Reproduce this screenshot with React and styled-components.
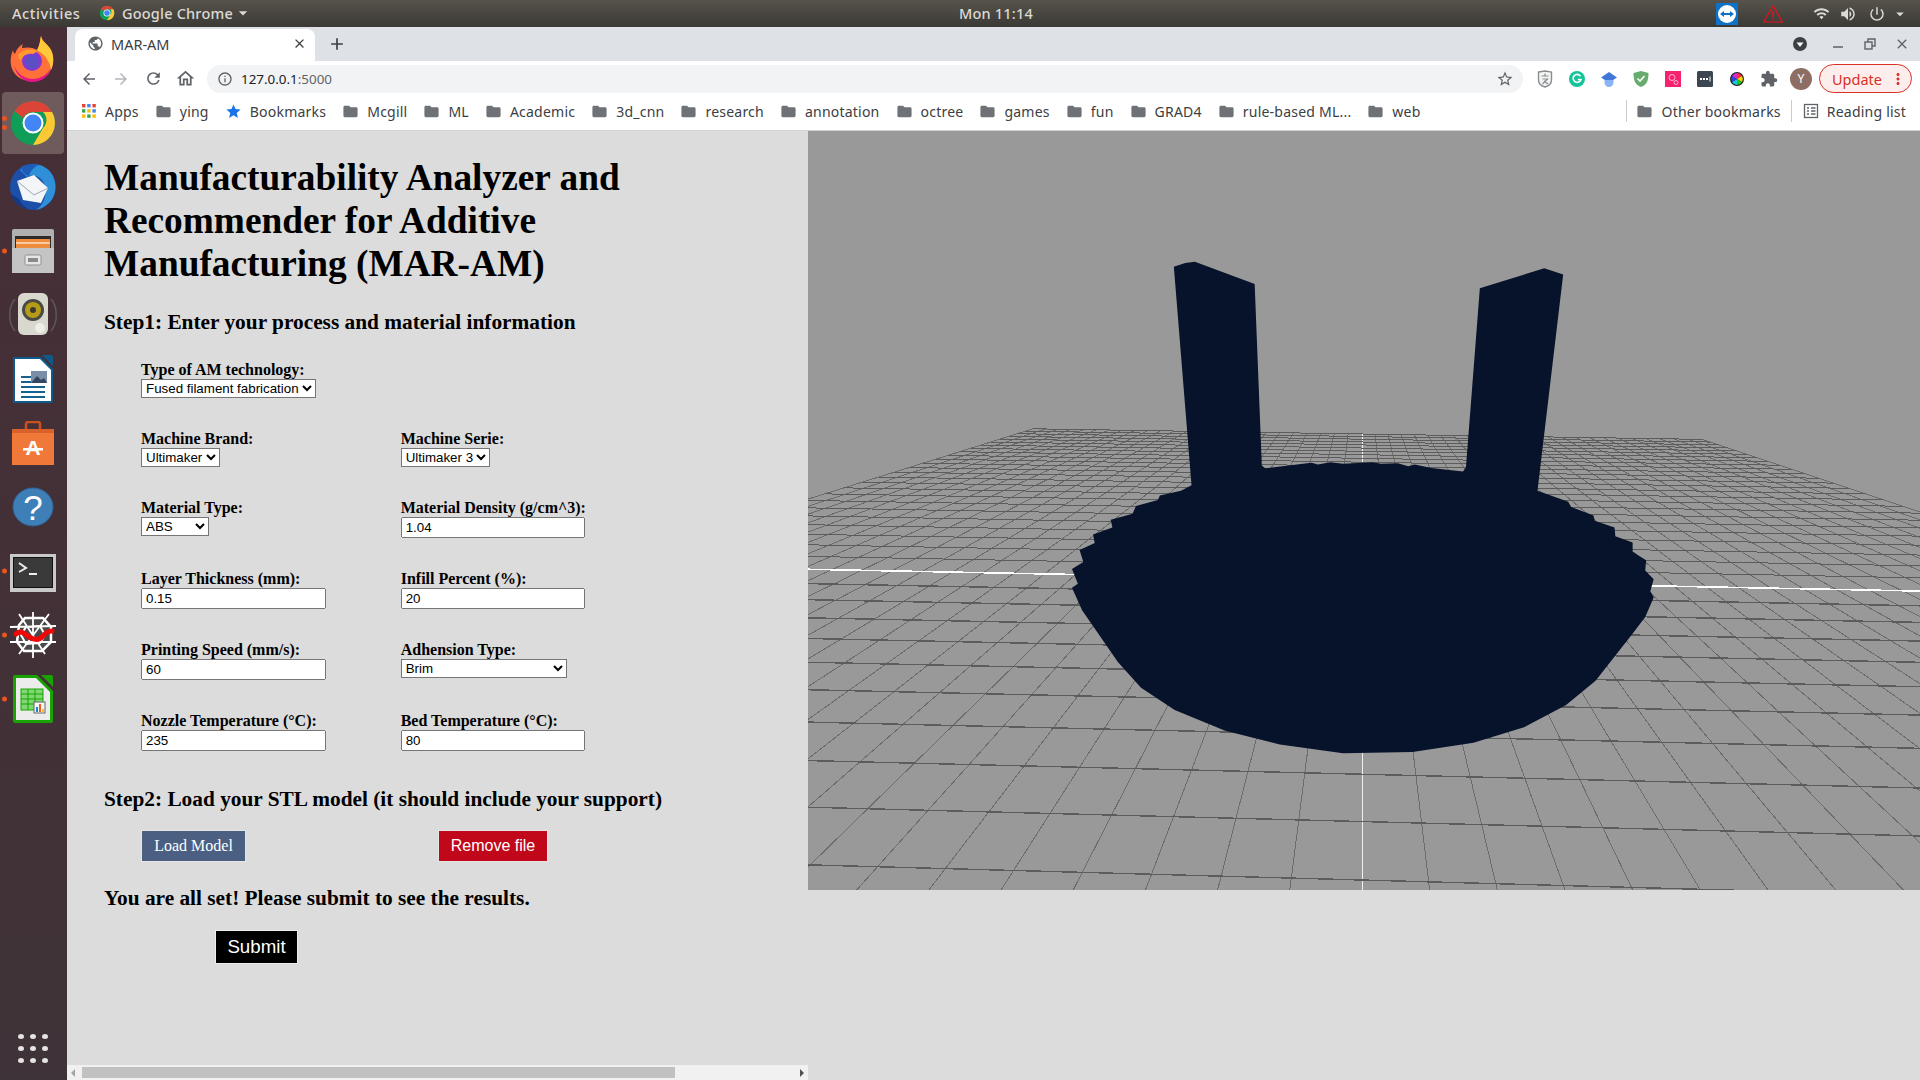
import React from "react";
import styled, { createGlobalStyle } from "styled-components";
import {
  MdAdd,
  MdArrowBack,
  MdArrowDropDown,
  MdArrowForward,
  MdClose,
  MdExtension,
  MdFolder,
  MdInfoOutline,
  MdMoreVert,
  MdOutlineHome,
  MdPowerSettingsNew,
  MdPublic,
  MdRefresh,
  MdStar,
  MdStarBorder,
  MdVolumeUp,
  MdWifi,
} from "react-icons/md";

const UI_FONT = `"Noto Sans", "Open Sans", sans-serif`;

const GlobalStyle = createGlobalStyle`
  html, body {
    margin: 0;
    padding: 0;
    overflow: hidden;
    background: #dcdcdc;
  }
  * { box-sizing: border-box; }
`;

const Screen = styled.div`
  width: 1920px;
  height: 1080px;
  display: flex;
  flex-direction: column;
  overflow: hidden;
`;

/* gnome top bar */
const TopBar = styled.div`
  height: 27px;
  flex: none;
  display: grid;
  grid-template-columns: 959px 71px 1fr;
  align-items: center;
  background: linear-gradient(#57534b, #3a3935);
  color: #dcdad5;
  font: 500 14.5px ${UI_FONT};
  letter-spacing: 0.2px;
`;

const TopLeft = styled.div`
  display: flex;
  align-items: center;
  padding: 0 0 2px 12px;
`;

const ActivitiesLabel = styled.span`
  width: 68px;
  letter-spacing: 0.6px;
`;

const AppMenu = styled.div`
  display: flex;
  align-items: center;
  margin-left: 19px;
  gap: 7px;
`;

const Clock = styled.div`
  text-align: center;
  white-space: nowrap;
  padding-bottom: 2px;
`;

const TopRight = styled.div`
  display: flex;
  align-items: center;
  padding-left: 686px;
  color: #dcdad5;
`;

const TrayIcon = styled.span`
  display: flex;
  align-items: center;
  justify-content: center;
  width: ${(p) => p.$w}px;
  margin-left: ${(p) => p.$ml || 0}px;
`;

const Desktop = styled.div`
  flex: 1;
  display: flex;
  min-height: 0;
`;

/* launcher */
const Dock = styled.div`
  width: 67px;
  flex: none;
  display: flex;
  flex-direction: column;
  gap: 2px;
  padding: 1px 0 16px;
  background: linear-gradient(#482e36, #3e3338);
`;

const DockItem = styled.div`
  position: relative;
  width: 62px;
  height: 62px;
  margin-left: 2px;
  display: flex;
  align-items: center;
  justify-content: center;
  border-radius: 4px;
  background: ${(p) => (p.$active ? "#6f5a5c" : "transparent")};
`;

const DockDots = styled.div`
  position: absolute;
  left: 0;
  top: 50%;
  transform: translateY(-50%);
  display: flex;
  flex-direction: column;
  gap: 4px;
`;

const DockDot = styled.i`
  display: block;
  width: 5px;
  height: 5px;
  border-radius: 50%;
  background: #e95420;
`;

const ShowApps = styled.div`
  margin: auto 0 0 2px;
  width: 62px;
  height: 32px;
  display: grid;
  grid-template-columns: repeat(3, 6px);
  gap: 7px 6px;
  justify-content: center;
  align-content: center;
  i {
    width: 6px;
    height: 5px;
    border-radius: 50%;
    background: #e6e4e2;
  }
`;

const Browser = styled.div`
  flex: 1;
  min-width: 0;
  display: flex;
  flex-direction: column;
`;

const TabStrip = styled.div`
  height: 34px;
  flex: none;
  display: flex;
  align-items: flex-end;
  padding: 0 2px 0 8px;
  background: #dee1e6;
`;

const Tab = styled.div`
  width: 240px;
  height: 32px;
  display: flex;
  align-items: center;
  padding: 0 8px 3px 12px;
  background: #fff;
  border-radius: 8px 8px 0 0;
  color: #3c4043;
  font: 14.5px ${UI_FONT};
  span { margin-left: 7px; flex: 1; }
`;

const NewTab = styled.div`
  width: 28px;
  height: 34px;
  margin-left: 8px;
  display: flex;
  align-items: center;
  justify-content: center;
  color: #3c4043;
`;

const WindowButtons = styled.div`
  margin-left: auto;
  height: 34px;
  display: flex;
  align-items: center;
  color: #3c4043;
`;

const WindowButton = styled.div`
  width: 32px;
  display: flex;
  justify-content: center;
  margin-right: ${(p) => p.$mr || 0}px;
`;

const Toolbar = styled.div`
  height: 35px;
  flex: none;
  display: flex;
  align-items: center;
  padding: 0 8px 0 6px;
  background: #fff;
`;

const NavButton = styled.div`
  width: 32px;
  display: flex;
  justify-content: center;
  color: ${(p) => (p.$off ? "#b4b7bb" : "#5f6368")};
`;

const AddressBar = styled.div`
  flex: 1;
  height: 28px;
  margin: 0 6px;
  display: flex;
  align-items: center;
  padding: 0 9px 0 10px;
  border-radius: 14px;
  background: #f1f3f4;
  color: #202124;
  font: 13.4px ${UI_FONT};
  em {
    font-style: normal;
    color: #5f6368;
  }
`;

const Url = styled.div`
  margin-left: 8px;
  flex: 1;
`;

const ExtButton = styled.div`
  width: 32px;
  display: flex;
  justify-content: center;
  align-items: center;
  color: #5f6368;
`;

const Avatar = styled.div`
  width: 22px;
  height: 22px;
  border-radius: 50%;
  display: flex;
  align-items: center;
  justify-content: center;
  background: #8d6e63;
  color: #fff;
  font: 12px ${UI_FONT};
`;

const UpdatePill = styled.div`
  width: 93px;
  height: 29px;
  margin-left: 2px;
  display: flex;
  align-items: center;
  justify-content: space-between;
  padding: 0 4px 0 12px;
  border: 1px solid #d93025;
  border-radius: 15px;
  background: #fdeeed;
  color: #d93025;
  font: 14.5px ${UI_FONT};
`;

const BookmarkBar = styled.div`
  height: 35px;
  flex: none;
  display: flex;
  align-items: center;
  padding: 0 14px 4px 14px;
  gap: 16px;
  background: #fff;
  border-bottom: 1px solid #d0d2d5;
  color: #3c4043;
  font: 14.05px ${UI_FONT};
  letter-spacing: 0.2px;
`;

const Bookmark = styled.div`
  display: flex;
  align-items: center;
  gap: 8px;
  white-space: nowrap;
  color: #3c4043;
  svg { flex: none; }
`;

const BarSeparator = styled.div`
  width: 1px;
  height: 22px;
  background: #c9cbce;
  margin: ${(p) => (p.$push ? "0 -7px 0 auto" : "0 -5.5px")};
`;

const Content = styled.div`
  flex: 1;
  min-height: 0;
  display: grid;
  grid-template-columns: 741px 1fr;
  background: #dcdcdc;
`;

const FormColumn = styled.div`
  display: flex;
  flex-direction: column;
  min-height: 0;
`;

const FormBody = styled.div`
  flex: 1;
  padding: 25px 0 0 37px;
  color: #000;
  font-family: "Liberation Serif", "Times New Roman", serif;
`;

const Title = styled.h1`
  margin: 0;
  width: 560px;
  font-size: 37.33px;
  line-height: 43px;
  font-weight: 700;
`;

const Step = styled.h3`
  margin: ${(p) => p.$mt}px 0 0;
  font-size: 21.33px;
  line-height: 24px;
  font-weight: 700;
`;

const FieldGrid = styled.div`
  margin: 26px 0 0 37px;
  display: grid;
  grid-template-columns: 259.7px 1fr;
  row-gap: 31px;
  align-items: start;
`;

const Field = styled.div`
  display: flex;
  flex-direction: column;
  align-items: flex-start;
`;

const FieldLabel = styled.label`
  font-size: 16px;
  line-height: 19px;
  font-weight: 700;
`;

const SelectBox = styled.select`
  width: ${(p) => p.$w}px;
  height: 19px;
  font: 13.33px "Liberation Sans", Arial, sans-serif;
  background: #fff;
`;

const TextBox = styled.input`
  width: ${(p) => p.$w || 184}px;
  height: 21px;
  font: 13.33px "Liberation Sans", Arial, sans-serif;
  padding: 1px 3px;
`;

const LoadRow = styled.div`
  margin: 19px 0 0 37px;
  display: flex;
`;

const ActionButton = styled.button`
  width: ${(p) => p.$w}px;
  height: 32px;
  margin-right: ${(p) => p.$mr || 0}px;
  padding: 0;
  border: 1px solid #e6e6e6;
  background: ${(p) => p.$bg};
  color: #fff;
  font-size: 16px;
  font-family: ${(p) =>
    p.$serif
      ? `"Liberation Serif", serif`
      : `"Liberation Sans", Arial, sans-serif`};
`;

const SubmitButton = styled.button`
  display: block;
  width: 83px;
  height: 34px;
  margin: 20px 0 0 111px;
  padding: 0;
  border: 1px solid #eee;
  background: #000;
  color: #fff;
  font: 18.7px "Liberation Sans", Arial, sans-serif;
`;

const ScrollTrack = styled.div`
  height: 15px;
  flex: none;
  display: flex;
  align-items: center;
  background: #f1f1f1;
  position: relative;
`;

const ScrollThumb = styled.div`
  width: 593px;
  height: 11px;
  margin-left: 15px;
  background: #c1c1c1;
`;

const ScrollArrow = styled.i`
  position: absolute;
  top: 4px;
  ${(p) => (p.$right ? "right: 4px;" : "left: 4px;")}
  border-top: 4px solid transparent;
  border-bottom: 4px solid transparent;
  ${(p) =>
    p.$right
      ? "border-left: 4px solid #505050;"
      : "border-right: 4px solid #a3a3a3;"}
`;

const Viewer = styled.svg`
  display: block;
  width: 1112px;
  height: 759px;
  background: #999;
`;

/* ---- grid floor of the stl viewer, worked out from a vanishing point ---- */
const VP_X = 1362;
const VP_Y = 326;
const FAR_Y = 434;

const rowSlope = (y0) => 0.013 + 0.000026 * (y0 - VP_Y);
const rowY = (k) => VP_Y + 1 / (0.001805 + 0.000213 * k);
const spread = (u) => (u < 0 ? (u * 3.2) / 25 : (u * 3.0) / 25);

// where a depth line with spread a meets the row through (VP_X, y0)
const meet = (a, y0) => {
  const s = rowSlope(y0);
  const y = (y0 - a * s * VP_Y) / (1 - a * s);
  return [VP_X + a * (y - VP_Y), y];
};

const FloorGrid = () => {
  const rows = [];
  for (let k = 0; k <= 35; k++) {
    const y0 = rowY(k);
    const [x1, y1] = meet(spread(-25), y0);
    const [x2, y2] = meet(spread(25), y0);
    rows.push(
      <line
        key={"r" + k}
        x1={x1}
        y1={y1}
        x2={x2}
        y2={y2}
        stroke={k === 10 ? "#fff" : "#5c5c5c"}
        strokeWidth={k === 10 ? 1.6 : k < 10 ? 1.4 : 1}
      />
    );
  }
  const cols = [];
  for (let u = -25; u <= 25; u++) {
    const a = spread(u);
    const [x1, y1] = meet(a, FAR_Y);
    cols.push(
      <line
        key={"c" + u}
        x1={x1}
        y1={y1}
        x2={VP_X + a * (900 - VP_Y)}
        y2={900}
        stroke={u === 0 ? "#f0f0f0" : "#6c6c6c"}
        strokeWidth={1}
      />
    );
  }
  return (
    <g shapeRendering="crispEdges">
      {cols}
      {rows}
    </g>
  );
};

const MODEL_POINTS =
  "318,78 345,67 368,63 510,128 527,655 535,663 610,652 645,647 660,652 690,645 720,650 790,645 810,650 850,648 875,657 890,652 930,662 1005,672 1012,660 1045,140 1198,82 1243,100 1182,728 1255,760 1262,775 1315,800 1318,815 1365,835 1367,860 1408,878 1408,905 1440,930 1438,960 1458,985 1450,1020 1458,1038 1438,1095 1410,1140 1320,1280 1250,1350 1150,1415 1030,1460 885,1487 720,1490 570,1465 440,1425 320,1365 240,1300 185,1225 100,1075 76,1010 90,998 76,955 103,935 94,900 130,880 126,855 172,835 168,812 220,795 228,772 280,755 285,742 335,728 360,712";

/* ---- logos ---- */
const ChromeLogo = ({ size }) => (
  <svg width={size} height={size} viewBox="0 0 48 48">
    <circle cx="24" cy="24" r="22" fill="#0f9d58" />
    <path d="M24 2a22 22 0 0 1 19 11H24a11 11 0 0 0-10 6L5.500 12A22 22 0 0 1 24 2z" fill="#db4437" />
    <path d="M43 13a22 22 0 0 1-19 33l10-17a11 11 0 0 0 0-16z" fill="#fcc934" />
    <circle cx="24" cy="24" r="10.500" fill="#fff" />
    <circle cx="24" cy="24" r="8.500" fill="#4285f4" />
  </svg>
);

const FirefoxLogo = () => (
  <svg width="48" height="48" viewBox="0 0 48 48">
    <path d="M32 1c1 6 7 8 10 14 5 10 1 23-7 28-9 5-21 4-28-3C1 34 0 24 4 15c0 2 1 3 2 4 1-4 4-8 8-10-1 2-1 3-1 4 5-1 11-1 15 2 3-5 3-10 4-14z" fill="#ff7139" />
    <path d="M32 1c1 6 7 8 10 14 3 6 3 14 0 20-1-7-4-14-14-20 3-5 3-10 4-14z" fill="#ffc93a" />
    <path d="M5 30c3 9 11 14 19 14 7 0 14-4 18-11-3 9-10 14-18 14C14 47 7 40 5 30z" fill="#e31587" />
    <circle cx="23" cy="26" r="10" fill="#7d3bd1" />
    <circle cx="23" cy="27" r="6.500" fill="#5b4fc4" />
    <path d="M9 20c4-5 12-7 20-4l-5 3c-5-1-10 1-12 6-2 0-3-3-3-5z" fill="#ff9a2e" />
  </svg>
);

const ThunderbirdLogo = () => (
  <svg width="50" height="50" viewBox="0 0 50 50">
    <circle cx="25" cy="25" r="23" fill="#1c4fa8" />
    <path d="M12 8C20-1 38 0 45 14c4 9 3 19-3 26-4 4-9 7-14 8 8-6 11-15 9-24-2-8-10-13-18-9z" fill="#2f8fd8" />
    <path d="M9 19 26 13l14 13-7 15-18-3z" fill="#f4f5f7" />
    <path d="M9 19l17 14 14-7" fill="none" stroke="#9aa7bb" strokeWidth="1" />
    <path d="M13 5c5-3 12-4 18-2-5 2-9 6-10 11-4-1-7-4-8-9z" fill="#1c5cb8" />
    <path d="M3 32c2 8 9 14 18 15-5-3-8-5-10-10z" fill="#123a86" />
  </svg>
);

const FilesLogo = () => (
  <svg width="42" height="44" viewBox="0 0 42 44">
    <rect x="0" y="0" width="42" height="44" rx="2" fill="#b0b0b0" />
    <rect x="3" y="7" width="36" height="12" fill="#2d2a28" />
    <rect x="4" y="10" width="34" height="9" fill="#ef8b3c" />
    <rect x="4" y="13" width="34" height="2" fill="#f8c9a0" />
    <rect x="0" y="19" width="42" height="25" fill="#c4c4c4" />
    <rect x="13" y="26" width="16" height="10" rx="1.500" fill="#e6e6e6" stroke="#8f8f8f" />
    <rect x="16" y="29" width="10" height="4" fill="#8a8a8a" />
  </svg>
);

const SpeakerLogo = () => (
  <svg width="48" height="44" viewBox="0 0 48 44">
    <path d="M6 6C-1 14-1 30 6 38M42 6c7 8 7 24 0 32" fill="none" stroke="#5d5663" strokeWidth="1.500" />
    <rect x="9" y="0" width="30" height="42" rx="6" fill="#d8d8cf" />
    <circle cx="24" cy="17" r="11" fill="#4a4a44" />
    <circle cx="24" cy="17" r="8" fill="#b59b16" />
    <circle cx="24" cy="17" r="3" fill="#3b3a30" />
    <circle cx="31" cy="35" r="5" fill="#eeeee6" />
  </svg>
);

const WriterLogo = () => (
  <svg width="40" height="48" viewBox="0 0 40 48">
    <path d="M0 2h28l12 12v32a2 2 0 0 1-2 2H0z" fill="#0f5a8a" />
    <path d="M2 4h25l11 11v31H2z" fill="#fff" />
    <path d="M29 0h9a2 2 0 0 1 2 2v9z" fill="#0f5a8a" />
    <path d="M8 21h11v2H8zM8 26h11v2H8zM8 31h24v2H8zM8 36h24v2H8zM8 41h24v2H8z" fill="#15608f" />
    <rect x="18" y="16" width="16" height="12" fill="#7b8ea8" />
    <path d="M18 28l6-7 4 4 3-2 3 5z" fill="#33465f" />
  </svg>
);

const StoreLogo = () => (
  <svg width="42" height="44" viewBox="0 0 42 44">
    <path d="M14 8V3a2 2 0 0 1 2-2h10a2 2 0 0 1 2 2v5" fill="none" stroke="#c9501f" strokeWidth="2.500" />
    <path d="M0 8h42v36H0z" fill="#f0793a" />
    <path d="M0 8h42v4H0z" fill="#d9602a" />
    <text x="21" y="34" textAnchor="middle" fill="#fff" fontFamily="Liberation Sans" fontWeight="700" fontSize="21">A</text>
    <rect x="11" y="27" width="20" height="2.500" fill="#fff" />
  </svg>
);

const HelpLogo = () => (
  <svg width="42" height="40" viewBox="0 0 42 40">
    <ellipse cx="21" cy="20" rx="20" ry="19" fill="#3f7fb8" stroke="#2f6499" />
    <text x="21" y="33" textAnchor="middle" fill="#fff" fontFamily="Liberation Sans" fontWeight="400" fontSize="35">?</text>
  </svg>
);

const TerminalLogo = () => (
  <svg width="46" height="42" viewBox="0 0 46 42">
    <rect y="4" width="46" height="38" fill="#c9c9c9" />
    <rect x="3" y="7" width="40" height="31" fill="#111" />
    <rect x="4" y="8" width="38" height="29" fill="#3a3a3a" />
    <path d="M9 13l7 5-7 4" fill="none" stroke="#eee" strokeWidth="2" />
    <path d="M19 24h8" stroke="#eee" strokeWidth="2" />
  </svg>
);

const WebLogo = () => (
  <svg width="48" height="48" viewBox="0 0 48 48">
    <path d="M10 14 16 7l18 0 8 9 0 15-9 9-18 0-7-9z" fill="#4a4a4a" stroke="#fff" strokeWidth="2.500" />
    <path d="M17 16l14-1 5 9-5 8-14 1-5-9z" fill="none" stroke="#fff" strokeWidth="2" />
    <path d="M24 1v46M1 16l46-1M47 31 1 31M10 3l26 40M40 3 10 43" stroke="#fff" strokeWidth="1.800" fill="none" />
    <path d="M7 23c5-4 8-1 13 3 5 3 10 4 14-1 3-4 6-5 9-5" fill="none" stroke="#f00808" strokeWidth="5" strokeLinecap="round" />
  </svg>
);

const CalcLogo = () => (
  <svg width="40" height="48" viewBox="0 0 40 48">
    <path d="M0 2a2 2 0 0 1 2-2h22l16 16v30a2 2 0 0 1-2 2H2a2 2 0 0 1-2-2z" fill="#18a303" />
    <path d="M3 3h20l14 14v28H3z" fill="#ececec" />
    <path d="M28 0h10a2 2 0 0 1 2 2v10z" fill="#18a303" />
    <rect x="8" y="14" width="22" height="21" fill="#7fd874" stroke="#18a303" />
    <path d="M8 19h22M8 24h22M8 29h22M15 14v21M22 14v21" stroke="#18a303" fill="none" />
    <rect x="21" y="27" width="11" height="11" fill="#f5f5f5" stroke="#666" />
    <path d="M23 32h2v5h-2z" fill="#1f7fd0" />
    <path d="M26 29h2v8h-2z" fill="#e8601c" />
    <path d="M29 34h2v3h-2z" fill="#f2c230" />
  </svg>
);

const TeamViewerLogo = () => (
  <svg width="22" height="22" viewBox="0 0 22 22">
    <rect width="22" height="22" fill="#0e72c9" />
    <circle cx="11" cy="11" r="9" fill="#fff" />
    <path d="M4 11l4-3v2h6V8l4 3-4 3v-2H8v2z" fill="#0e72c9" />
  </svg>
);

const WarningLogo = () => (
  <svg width="20" height="18" viewBox="0 0 20 18">
    <path d="M10 1 19.500 17H.500z" fill="none" stroke="#e8101a" strokeWidth="1.200" />
    <path d="M9.300 6h1.400v6H9.300zM9.300 13.500h1.400V15H9.300z" fill="#e8101a" />
  </svg>
);

const AppsGrid = () => (
  <svg width="16" height="16" viewBox="0 0 16 16">
    {["#ea4335", "#4285f4", "#ea4335", "#34a853", "#fbbc05", "#4285f4", "#fbbc05", "#34a853", "#fbbc05"].map((c, i) => (
      <rect key={i} x={1 + (i % 3) * 5.2} y={1 + Math.floor(i / 3) * 5.2} width="3.400" height="3.400" fill={c} />
    ))}
  </svg>
);

const ReadingIcon = () => (
  <svg width="16" height="16" viewBox="0 0 16 16" fill="none" stroke="#5f6368" strokeWidth="1.300">
    <rect x="1.500" y="1.500" width="13" height="13" />
    <path d="M4 5h2M8 5h4.500M4 8h2M8 8h4.500M4 11h2M8 11h4.500" />
  </svg>
);

const Extensions = () => (
  <>
    <ExtButton>
      <svg width="16" height="18" viewBox="0 0 16 18">
        <path d="M1.500 2 8 1l6.500 1v8c0 4-3 6-6.500 7-3.500-1-6.500-3-6.500-7z" fill="#f4f4f4" stroke="#8a8d90" strokeWidth="1.400" />
        <path d="M4.500 6h7M8 3.500V6M5.500 9h5L5.500 14M7 11l4 3" fill="none" stroke="#8a8d90" strokeWidth="1.200" />
      </svg>
    </ExtButton>
    <ExtButton>
      <svg width="16" height="16" viewBox="0 0 16 16">
        <circle cx="8" cy="8" r="8" fill="#15c39a" />
        <path d="M11.500 5.200A4 4 0 1 0 12 8.500H8.800" fill="none" stroke="#fff" strokeWidth="1.600" />
      </svg>
    </ExtButton>
    <ExtButton>
      <svg width="16" height="16" viewBox="0 0 16 16">
        <path d="M3.500 8h9v3.500a4.500 4.500 0 0 1-9 0z" fill="#8ab4f8" />
        <path d="M8 1l8 5.500-4 2.500H4L0 6.500z" fill="#3f78d8" />
      </svg>
    </ExtButton>
    <ExtButton>
      <svg width="16" height="18" viewBox="0 0 16 18">
        <path d="M8 1l7.500 2c0 7-1.500 12-7.500 14C2 15 .500 10 .500 3z" fill="#68ab6e" />
        <path d="M4.500 8.500l2.500 2.500 4.500-5" fill="none" stroke="#fff" strokeWidth="1.600" />
      </svg>
    </ExtButton>
    <ExtButton>
      <svg width="16" height="16" viewBox="0 0 16 16">
        <rect width="16" height="16" fill="#f7226f" />
        <circle cx="7" cy="6.500" r="3" fill="none" stroke="#ffc2d8" strokeWidth="0.900" />
        <circle cx="11" cy="11.500" r="2" fill="none" stroke="#ffc2d8" strokeWidth="0.900" />
      </svg>
    </ExtButton>
    <ExtButton>
      <svg width="16" height="16" viewBox="0 0 16 16">
        <rect width="16" height="16" rx="1.500" fill="#3b4652" />
        <path d="M3 7h2v2H3zM6 7h2v2H6zM9 7h2v2H9zM12.500 5.500h1v5h-1z" fill="#fff" />
      </svg>
    </ExtButton>
    <ExtButton>
      <svg width="14" height="14" viewBox="0 0 14 14">
        <circle cx="7" cy="7" r="7" fill="#222" />
        <path d="M7 7 7 1a6 6 0 0 1 5 3z" fill="#ff2d2d" />
        <path d="M7 7 12 4a6 6 0 0 1 0 6z" fill="#ffd400" />
        <path d="M7 7l5 3a6 6 0 0 1-5 3z" fill="#21c521" />
        <path d="M7 7v6a6 6 0 0 1-5-3z" fill="#16c7d6" />
        <path d="M7 7 2 10a6 6 0 0 1 0-6z" fill="#2a48e0" />
        <path d="M7 7 2 4a6 6 0 0 1 5-3z" fill="#d42bd4" />
      </svg>
    </ExtButton>
    <ExtButton>
      <MdExtension size={18} />
    </ExtButton>
    <ExtButton>
      <Avatar>Y</Avatar>
    </ExtButton>
  </>
);

const BOOKMARKS = [
  "ying",
  "Bookmarks",
  "Mcgill",
  "ML",
  "Academic",
  "3d_cnn",
  "research",
  "annotation",
  "octree",
  "games",
  "fun",
  "GRAD4",
  "rule-based ML...",
  "web",
];

const DOCK = [
  { logo: <FirefoxLogo /> },
  { logo: <ChromeLogo size={48} />, dots: 2, active: true },
  { logo: <ThunderbirdLogo /> },
  { logo: <FilesLogo />, dots: 1 },
  { logo: <SpeakerLogo /> },
  { logo: <WriterLogo /> },
  { logo: <StoreLogo /> },
  { logo: <HelpLogo /> },
  { logo: <TerminalLogo />, dots: 1 },
  { logo: <WebLogo />, dots: 1 },
  { logo: <CalcLogo />, dots: 1 },
];

const Select = ({ w, value }) => (
  <SelectBox $w={w} defaultValue={value}>
    <option>{value}</option>
  </SelectBox>
);

const App = () => {
  return (
    <Screen>
      <GlobalStyle />
      <TopBar>
        <TopLeft>
          <ActivitiesLabel>Activities</ActivitiesLabel>
          <AppMenu>
            <ChromeLogo size={16} />
            Google Chrome
          </AppMenu>
          <MdArrowDropDown size={20} />
        </TopLeft>
        <Clock>Mon 11:14</Clock>
        <TopRight>
          <TrayIcon $w={22}>
            <TeamViewerLogo />
          </TrayIcon>
          <TrayIcon $w={20} $ml={25}>
            <WarningLogo />
          </TrayIcon>
          <TrayIcon $w={18} $ml={29}>
            <MdWifi size={17} />
          </TrayIcon>
          <TrayIcon $w={18} $ml={9}>
            <MdVolumeUp size={18} />
          </TrayIcon>
          <TrayIcon $w={18} $ml={11}>
            <MdPowerSettingsNew size={18} />
          </TrayIcon>
          <TrayIcon $w={18} $ml={5}>
            <MdArrowDropDown size={20} />
          </TrayIcon>
        </TopRight>
      </TopBar>
      <Desktop>
        <Dock>
          {DOCK.map((item, i) => (
            <DockItem key={i} $active={item.active}>
              {item.dots && (
                <DockDots>
                  {Array.from({ length: item.dots }).map((_, d) => (
                    <DockDot key={d} />
                  ))}
                </DockDots>
              )}
              {item.logo}
            </DockItem>
          ))}
          <ShowApps>
            {Array.from({ length: 9 }).map((_, i) => (
              <i key={i} />
            ))}
          </ShowApps>
        </Dock>
        <Browser>
          <TabStrip>
            <Tab>
              <MdPublic size={17} color="#5f6368" />
              <span>MAR-AM</span>
              <MdClose size={15} />
            </Tab>
            <NewTab>
              <MdAdd size={20} />
            </NewTab>
            <WindowButtons>
              <WindowButton $mr={6}>
                <svg width="16" height="16" viewBox="0 0 16 16">
                  <circle cx="8" cy="8" r="7" fill="#3c4043" />
                  <path d="M4.500 6.500h7L8 11z" fill="#fff" />
                </svg>
              </WindowButton>
              <WindowButton>
                <svg width="12" height="12" viewBox="0 0 12 12">
                  <path d="M1 9h10" stroke="#5f6368" strokeWidth="1.500" />
                </svg>
              </WindowButton>
              <WindowButton>
                <svg width="12" height="12" viewBox="0 0 12 12" fill="none" stroke="#5f6368" strokeWidth="1.400">
                  <rect x="1" y="4" width="7" height="7" />
                  <path d="M4 4V1h7v7H8" />
                </svg>
              </WindowButton>
              <WindowButton>
                <MdClose size={16} color="#5f6368" />
              </WindowButton>
            </WindowButtons>
          </TabStrip>
          <Toolbar>
            <NavButton>
              <MdArrowBack size={18} />
            </NavButton>
            <NavButton $off>
              <MdArrowForward size={18} />
            </NavButton>
            <NavButton>
              <MdRefresh size={19} />
            </NavButton>
            <NavButton>
              <MdOutlineHome size={21} />
            </NavButton>
            <AddressBar>
              <MdInfoOutline size={16} color="#5f6368" />
              <Url>
                127.0.0.1<em>:5000</em>
              </Url>
              <MdStarBorder size={18} color="#5f6368" />
            </AddressBar>
            <Extensions />
            <UpdatePill>
              Update
              <MdMoreVert size={18} />
            </UpdatePill>
          </Toolbar>
          <BookmarkBar>
            <Bookmark>
              <AppsGrid />
              Apps
            </Bookmark>
            {BOOKMARKS.map((name) => (
              <Bookmark key={name}>
                {name === "Bookmarks" ? (
                  <MdStar size={17} color="#1a73e8" />
                ) : (
                  <MdFolder size={17} color="#6e7175" />
                )}
                {name}
              </Bookmark>
            ))}
            <BarSeparator $push />
            <Bookmark>
              <MdFolder size={17} color="#6e7175" />
              Other bookmarks
            </Bookmark>
            <BarSeparator />
            <Bookmark>
              <ReadingIcon />
              Reading list
            </Bookmark>
          </BookmarkBar>
          <Content>
            <FormColumn>
              <FormBody>
                <Title>Manufacturability Analyzer and Recommender for Additive Manufacturing (MAR-AM)</Title>
                <Step $mt={25}>Step1: Enter your process and material information</Step>
                <FieldGrid>
                  <Field>
                    <FieldLabel>Type of AM technology:</FieldLabel>
                    <Select w={175} value="Fused filament fabrication" />
                  </Field>
                  <div />
                  <Field>
                    <FieldLabel>Machine Brand:</FieldLabel>
                    <Select w={79} value="Ultimaker" />
                  </Field>
                  <Field>
                    <FieldLabel>Machine Serie:</FieldLabel>
                    <Select w={89} value="Ultimaker 3" />
                  </Field>
                  <Field>
                    <FieldLabel>Material Type:</FieldLabel>
                    <Select w={68} value="ABS" />
                  </Field>
                  <Field>
                    <FieldLabel>Material Density (g/cm^3):</FieldLabel>
                    <TextBox defaultValue="1.04" />
                  </Field>
                  <Field>
                    <FieldLabel>Layer Thickness (mm):</FieldLabel>
                    <TextBox $w={185} defaultValue="0.15" />
                  </Field>
                  <Field>
                    <FieldLabel>Infill Percent (%):</FieldLabel>
                    <TextBox defaultValue="20" />
                  </Field>
                  <Field>
                    <FieldLabel>Printing Speed (mm/s):</FieldLabel>
                    <TextBox $w={185} defaultValue="60" />
                  </Field>
                  <Field>
                    <FieldLabel>Adhension Type:</FieldLabel>
                    <Select w={166} value="Brim" />
                  </Field>
                  <Field>
                    <FieldLabel>Nozzle Temperature (°C):</FieldLabel>
                    <TextBox $w={185} defaultValue="235" />
                  </Field>
                  <Field>
                    <FieldLabel>Bed Temperature (°C):</FieldLabel>
                    <TextBox defaultValue="80" />
                  </Field>
                </FieldGrid>
                <Step $mt={36}>Step2: Load your STL model (it should include your support)</Step>
                <LoadRow>
                  <ActionButton $w={105} $mr={192} $bg="#4a5f82" $serif>
                    Load Model
                  </ActionButton>
                  <ActionButton $w={110} $bg="#c1081a">
                    Remove file
                  </ActionButton>
                </LoadRow>
                <Step $mt={24}>You are all set! Please submit to see the results.</Step>
                <SubmitButton>Submit</SubmitButton>
              </FormBody>
              <ScrollTrack>
                <ScrollArrow />
                <ScrollThumb />
                <ScrollArrow $right />
              </ScrollTrack>
            </FormColumn>
            <div>
              <Viewer viewBox="808 131 1112 759">
                <FloorGrid />
                <polygon
                  points={MODEL_POINTS}
                  fill="#07132b"
                  transform="translate(1040 240) scale(0.4209 0.3444)"
                />
              </Viewer>
            </div>
          </Content>
        </Browser>
      </Desktop>
    </Screen>
  );
};

export default App;
